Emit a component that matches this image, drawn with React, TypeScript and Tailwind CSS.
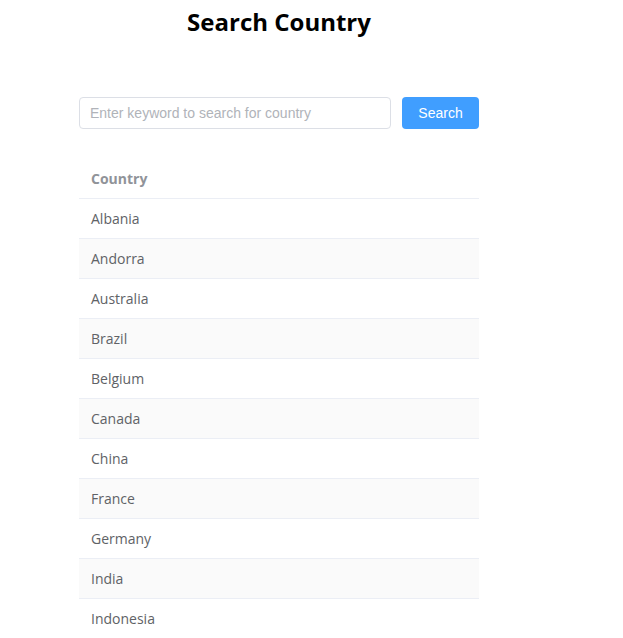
const countries = [
  'Albania',
  'Andorra',
  'Australia',
  'Brazil',
  'Belgium',
  'Canada',
  'China',
  'France',
  'Germany',
  'India',
  'Indonesia',
];

export default function App() {
  return (
    <main className="min-h-screen bg-white font-['Open_Sans',sans-serif]">
      <div className="ml-[79px] w-[400px]">
        <h1 className="pt-[6px] text-center text-[24px] font-bold leading-[32px] text-black">
          Search Country
        </h1>
        <div className="mt-[59px] flex gap-[11px]">
          <input
            className="h-8 w-[312px] rounded border border-[#dcdfe6] px-[10px] font-['Liberation_Sans',sans-serif] text-[14px] text-[#606266] outline-none placeholder:text-[#b0b3b9]"
            placeholder="Enter keyword to search for country"
          />
          <button className="h-8 flex-1 rounded bg-[#409eff] font-['Liberation_Sans',sans-serif] text-[14px] text-white">
            Search
          </button>
        </div>
        <table className="mt-[30px] w-full border-collapse text-[14px]">
          <thead>
            <tr className="border-b border-[#ebeef5]">
              <th className="h-[39px] px-3 text-left font-bold text-[#909399]">Country</th>
            </tr>
          </thead>
          <tbody>
            {countries.map((c, i) => (
              <tr key={c} className={`border-b border-[#ebeef5] ${i % 2 === 1 ? 'bg-[#fafafa]' : 'bg-white'}`}>
                <td className="h-[40px] px-3 text-[#606266]">{c}</td>
              </tr>
            ))}
          </tbody>
        </table>
      </div>
    </main>
  );
}
